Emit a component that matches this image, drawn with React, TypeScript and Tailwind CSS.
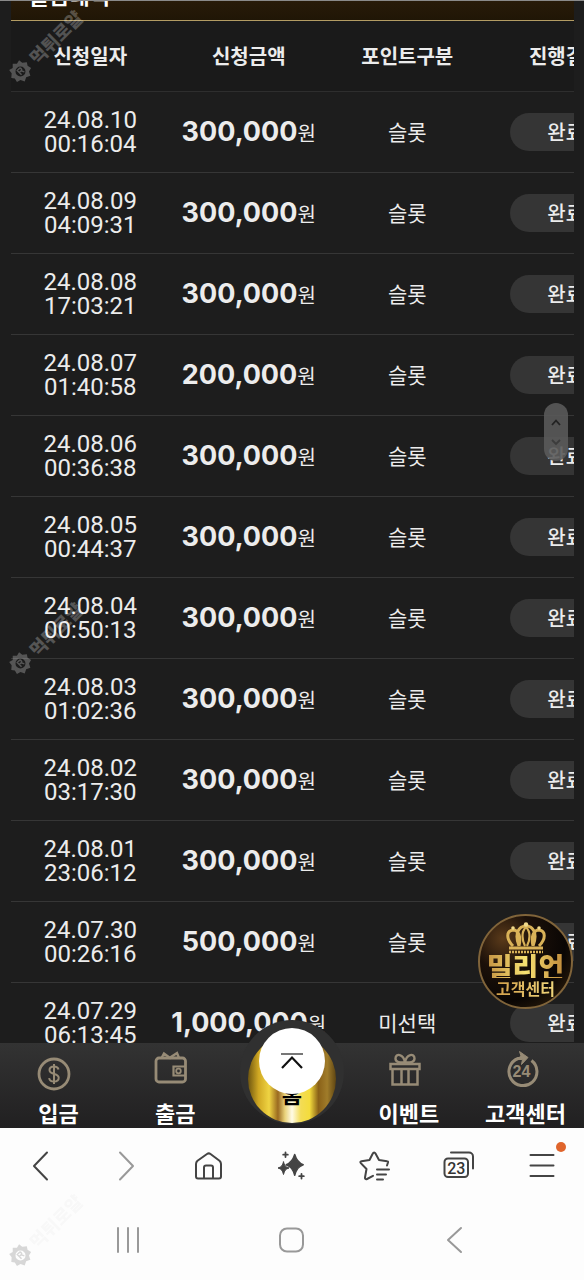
import { FC, ReactNode } from "react";

interface Request {
  date: string;
  time: string;
  amount: string;
  type: string;
}

const requests: Request[] = [
  { date: "24.08.10", time: "00:16:04", amount: "300,000", type: "슬롯" },
  { date: "24.08.09", time: "04:09:31", amount: "300,000", type: "슬롯" },
  { date: "24.08.08", time: "17:03:21", amount: "300,000", type: "슬롯" },
  { date: "24.08.07", time: "01:40:58", amount: "200,000", type: "슬롯" },
  { date: "24.08.06", time: "00:36:38", amount: "300,000", type: "슬롯" },
  { date: "24.08.05", time: "00:44:37", amount: "300,000", type: "슬롯" },
  { date: "24.08.04", time: "00:50:13", amount: "300,000", type: "슬롯" },
  { date: "24.08.03", time: "01:02:36", amount: "300,000", type: "슬롯" },
  { date: "24.08.02", time: "03:17:30", amount: "300,000", type: "슬롯" },
  { date: "24.08.01", time: "23:06:12", amount: "300,000", type: "슬롯" },
  { date: "24.07.30", time: "00:26:16", amount: "500,000", type: "슬롯" },
  { date: "24.07.29", time: "06:13:45", amount: "1,000,000", type: "미선택" },
];

const RequestRow: FC<{ request: Request }> = ({ request }) => {
  return (
    <tr className="h-[81px] border-b border-[#363636]">
      <td className="font-['Roboto'] text-2xl leading-6">
        {request.date}
        <br />
        {request.time}
      </td>
      <td className="whitespace-nowrap">
        <span className="font-['Inter'] text-[27px] leading-8 font-bold">
          {request.amount}
        </span>
        <span className="text-xl">원</span>
      </td>
      <td className="text-[21px]">{request.type}</td>
      <td>
        <span className="mx-auto flex h-[38px] w-28 items-center justify-center rounded-full bg-[#353535] text-xl font-medium">
          완료
        </span>
      </td>
    </tr>
  );
};

const Watermark: FC<{ className: string }> = ({ className }) => {
  return (
    <div
      aria-hidden="true"
      className={`pointer-events-none absolute flex origin-left items-center gap-1 -rotate-45 ${className}`}
    >
      <svg width="24" height="24" viewBox="0 0 24 24" fill="currentColor">
        <path
          fillRule="evenodd"
          d="M12 1l3 3 4-1 .5 4L23 10l-2 3 1 4-4 1-2 4-4-2-4 2-2-4-4-1 1-4-2-3 3.500-3L5 3l4 1zM12 7a5 5 0 100 10 5 5 0 000-10z"
        />
        <path
          d="M10.500 15v-6h2.500a1.500 1.500 0 010 3h-2.500m2.500 0l1.500 3"
          fill="none"
          stroke="currentColor"
          strokeWidth="1.500"
        />
      </svg>
      <span className="text-lg leading-6 font-black whitespace-nowrap">
        먹튀로얄
      </span>
    </div>
  );
};

const DepositIcon = () => (
  <svg width="34" height="40" viewBox="0 -6 34 40" fill="none" stroke="currentColor">
    <circle cx="17" cy="17" r="15" strokeWidth="2.800" />
    <path
      d="M21.500 12.500c-.5-2-2.200-3-4.500-3-2.500 0-4.500 1.300-4.500 3.600 0 5.200 9.200 2.600 9.200 7.600 0 2.500-2 3.800-4.700 3.800s-4.500-1.200-4.900-3.400M17 7v20"
      strokeWidth="2"
    />
  </svg>
);

const WithdrawIcon = () => (
  <svg width="34" height="34" viewBox="0 0 34 34" fill="none" stroke="currentColor">
    <rect x="2" y="7" width="29.500" height="24" rx="3" strokeWidth="2.800" />
    <path d="M7.500 7l2.500-4.500 6 4.500 1-1 6-4 2 5" strokeWidth="2.400" />
    <path d="M31 15.500H19.500v9H31" strokeWidth="2.200" />
    <circle cx="24.500" cy="20" r="2.300" strokeWidth="1.800" />
  </svg>
);

const EventIcon = () => (
  <svg width="34" height="36" viewBox="0 0 34 36" fill="none" stroke="currentColor">
    <path
      d="M2.500 13h29v5h-29zM4.500 18v15.500h25V18M13.500 18v15M20.500 18v15"
      strokeWidth="2.500"
    />
    <path
      d="M17 11.500c-3.500 0-9.500.5-9.500-4 0-5.500 8-5 9.500 4zM17 11.500c3.500 0 9.500.5 9.500-4 0-5.500-8-5-9.500 4z"
      strokeWidth="2.400"
    />
  </svg>
);

const SupportIcon = () => (
  <svg width="34" height="38" viewBox="0 0 34 38" fill="none" stroke="currentColor">
    <path d="M26.500 9.500A14 14 0 1 1 13 7.500h4" strokeWidth="3" />
    <path
      d="M14.500.5l8.500 6-6.500 7 1-5-4-1.500 2.500-2z"
      fill="currentColor"
      strokeWidth="1"
    />
    <text
      x="16.500"
      y="26"
      textAnchor="middle"
      className="fill-current stroke-none font-['Liberation_Sans'] text-base font-bold"
    >
      24
    </text>
  </svg>
);

const NavItem: FC<{ label: string; children: ReactNode }> = ({
  label,
  children,
}) => {
  return (
    <a
      href="#"
      className="flex h-full flex-col items-center justify-between pt-2 pb-0.5 text-[22px] leading-7 font-bold whitespace-nowrap"
    >
      <span className="mr-2 text-[#978b76]">{children}</span>
      {label}
    </a>
  );
};

const HomeItem = () => {
  return (
    <div className="relative flex h-full justify-center">
      <div className="absolute -top-[23px] size-[104px] rounded-full bg-[#303030]" />
      <a
        href="#"
        className="absolute -top-2 flex size-[88px] items-end justify-center rounded-full bg-[linear-gradient(90deg,#6f5610_0%,#d0a823_12%,#efd443_24%,#9a6a20_34%,#e9d27a_42%,#fffbe6_50%,#f3dc55_60%,#f4dc3c_70%,#8a6118_80%,#a07c2a_90%,#5e4512_100%)] pb-4 text-[22px] leading-7 font-bold text-black"
      >
        홈
      </a>
      <button
        type="button"
        aria-label="맨 위로"
        className="absolute -top-[15px] flex size-[66px] items-center justify-center rounded-full bg-white"
      >
        <svg width="24" height="20" viewBox="0 0 24 20" fill="none">
          <path d="M1 3h22" stroke="#777" strokeWidth="2" />
          <path d="M2 17L12 6.500 22 17" stroke="#111" strokeWidth="2.200" />
        </svg>
      </button>
    </div>
  );
};

const SupportBadge = () => {
  return (
    <button
      type="button"
      className="absolute right-[11px] bottom-[34px] flex size-[95px] flex-col items-center rounded-full border-2 border-[#80643a] bg-[radial-gradient(circle_at_25%_25%,#5a3a1a_0%,#1b1009_32%,#0a0604_65%,#3c280f_100%)] pt-1.5"
    >
      <svg width="42" height="32" viewBox="0 0 42 32" fill="none" stroke="#d9b258">
        <path
          d="M8 24C1 17 1 9 8 8c6 0 8 7 6 16M14 24C9 11 14 4 21 4s12 7 7 20M28 24c-2-9 0-16 6-16 7 1 7 9 0 16"
          strokeWidth="3"
        />
        <path d="M21 5c-5 5-4 13-1 19M21 5c5 5 4 13 1 19" strokeWidth="2.200" />
        <path d="M4 26h34" strokeWidth="3" />
        <path d="M4 30h34" strokeWidth="2.500" strokeDasharray="2 1" />
        <g fill="#f1d98a" stroke="none">
          <circle cx="21" cy="2.500" r="2.200" />
          <circle cx="8" cy="6" r="1.800" />
          <circle cx="34" cy="6" r="1.800" />
        </g>
      </svg>
      <span className="bg-linear-to-r from-[#c59443] via-[#f8e272] to-[#c08a3a] bg-clip-text text-[28px] leading-6 font-black whitespace-nowrap text-transparent">
        밀리언
      </span>
      <span className="bg-linear-to-r from-[#d3a04a] to-[#f0d77c] bg-clip-text text-base leading-5 font-bold whitespace-nowrap text-transparent">
        고객센터
      </span>
    </button>
  );
};

const ScrollHandle = () => {
  return (
    <div className="absolute top-[402px] right-4 flex h-[58px] w-6 justify-center rounded-full bg-[#5a5a5a]/90 pt-3.5">
      <svg width="12" height="30" viewBox="0 0 12 30" fill="none" strokeWidth="1.800">
        <path d="M2 8l4-4.500L10 8" stroke="#222" />
        <path d="M2 23l4 4 4-4" stroke="#3c3c3c" />
      </svg>
    </div>
  );
};

const BrowserButton: FC<{ label: string; children: ReactNode }> = ({
  label,
  children,
}) => {
  return (
    <button
      type="button"
      aria-label={label}
      className="flex items-center justify-center"
    >
      <svg
        width="32"
        height="32"
        viewBox="0 0 32 32"
        fill="none"
        stroke="#444"
        strokeWidth="2"
        strokeLinecap="round"
        strokeLinejoin="round"
      >
        {children}
      </svg>
    </button>
  );
};

const BrowserBar = () => {
  return (
    <div className="grid h-[76px] grid-cols-7">
      <BrowserButton label="뒤로">
        <path d="M21 2.500L8 16l13 13.500" />
      </BrowserButton>
      <BrowserButton label="앞으로">
        <path d="M11 2.500L24 16 11 29.500" stroke="#999" />
      </BrowserButton>
      <BrowserButton label="홈 화면">
        <path d="M3 14c0-1.500.5-2.300 1.500-3.200L14 4c1.300-.9 2.300-.9 3.500 0l9 6.800c1 .9 1.500 1.700 1.500 3.200v12.500a2 2 0 01-2 2H5a2 2 0 01-2-2z" />
        <path d="M11 28V17.500a2 2 0 012-2h5a2 2 0 012 2V28" />
      </BrowserButton>
      <BrowserButton label="AI">
        <path
          d="M7.500 12c1 3.500 2 5 5.500 6-3.500 1-4.500 2.500-5.500 6.500-1-4-2-5.500-5.500-6.500 3.500-1 4.500-2.500 5.500-6z"
          fill="#444"
          strokeWidth="1"
        />
        <path
          d="M18.700 4.500c1.800 6 3.800 8.500 8.500 10.200-4.700 1.800-6.700 4.300-8.500 10.600-1.800-6.300-3.800-8.800-8.500-10.600 4.700-1.700 6.700-4.200 8.500-10.200z"
          fill="#444"
          stroke="#444"
          strokeWidth="1.500"
        />
        <path d="M9.500 2.500v4.500M7.200 4.700h4.600M25.500 24v4.500M23.200 26.200h4.600" strokeWidth="1.800" />
      </BrowserButton>
      <BrowserButton label="북마크">
        <path d="M28 15.500l1-3c.2-.8 0-1.200-1-1.300l-8-1.200L16.500 3.500c-.8-1.500-2-1.500-2.700 0L10.500 10l-8 1.200c-1.200.2-1.500 1-.7 1.900L7.500 19 6 27.500c-.2 1.500.7 2.200 2 1.500l6-3.200" />
        <path d="M18 19.500h12M18 24.500h9M18 29.500h6" />
      </BrowserButton>
      <BrowserButton label="탭">
        <path d="M8 2.500h18a4 4 0 014 4v12" />
        <rect x="1.500" y="8.500" width="23.500" height="18.500" rx="3.500" />
        <text
          x="13.300"
          y="23.500"
          textAnchor="middle"
          className="fill-[#333] stroke-none font-['Roboto'] text-base font-medium"
        >
          23
        </text>
      </BrowserButton>
      <BrowserButton label="메뉴">
        <path d="M4.500 5h23M4.500 15.500h23M4.500 26h23" />
      </BrowserButton>
    </div>
  );
};

const SystemBar = () => {
  return (
    <div className="grid h-[76px] grid-cols-3 px-12 pb-1">
      <BrowserButton label="최근 앱">
        <path d="M5 4v24M15 4v24M25 4v24" stroke="#999" />
      </BrowserButton>
      <BrowserButton label="홈">
        <rect x="4" y="4.500" width="23" height="23" rx="7" stroke="#999" />
      </BrowserButton>
      <BrowserButton label="이전">
        <path d="M22 4L9 16l13 12" stroke="#999" />
      </BrowserButton>
    </div>
  );
};

const App: FC = () => {
  return (
    <div className="relative flex h-screen flex-col overflow-hidden bg-[#fdfdfd] font-['Noto_Sans_CJK_KR',sans-serif]">
      <main className="relative min-h-0 flex-1 overflow-hidden border-t border-[#8a8a8a] bg-[#1d1d1d] pr-2.5 pl-[11px] text-[#ececec]">
        <div className="overflow-hidden">
          <h1 className="-mt-10 flex h-[60px] items-center border-b border-[#b39c63] bg-linear-to-b from-[#3a2512] to-[#201606] pt-2 pl-[18px] text-[22px] font-bold text-white">
            출금내역
          </h1>
          <table className="w-[634px] table-fixed text-center">
            <thead>
              <tr className="h-[70px] border-b border-[#2e2e2e] bg-[#1a1a1a] text-xl">
                <th>신청일자</th>
                <th>신청금액</th>
                <th>포인트구분</th>
                <th>진행결과</th>
              </tr>
            </thead>
            <tbody>
              {requests.map((request) => (
                <RequestRow key={request.date} request={request} />
              ))}
            </tbody>
          </table>
        </div>
        <SupportBadge />
        <ScrollHandle />
      </main>
      <nav className="grid h-[85px] shrink-0 grid-cols-5 bg-linear-to-b from-[#333] to-[#212021] text-white">
        <NavItem label="입금">
          <DepositIcon />
        </NavItem>
        <NavItem label="출금">
          <WithdrawIcon />
        </NavItem>
        <HomeItem />
        <NavItem label="이벤트">
          <EventIcon />
        </NavItem>
        <NavItem label="고객센터">
          <SupportIcon />
        </NavItem>
      </nav>
      <footer className="relative shrink-0">
        <BrowserBar />
        <SystemBar />
        <span className="absolute top-3.5 right-[18px] size-2.5 rounded-full bg-[#e0652c]" />
      </footer>
      <Watermark className="top-[68px] left-3 text-white/25" />
      <Watermark className="top-[660px] left-3 text-white/25" />
      <Watermark className="top-[1252px] left-3 text-black/15 [&>span]:opacity-15" />
    </div>
  );
};

export default App;
